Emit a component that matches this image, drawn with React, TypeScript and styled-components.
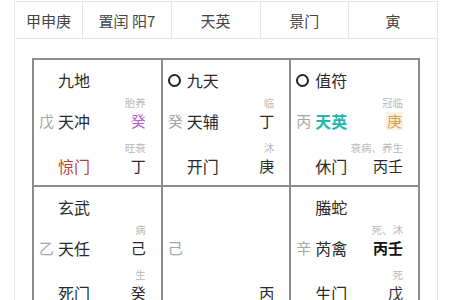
import React from 'react'
import styled, { createGlobalStyle, css } from 'styled-components'

const GlobalStyle = createGlobalStyle`
  html, body {
    margin: 0;
    padding: 0;
    background: #ffffff;
    font-family: "Noto Sans CJK SC", "Noto Sans", sans-serif;
    color: #333333;
  }
`

type Tone = 'plain' | 'purple' | 'orange' | 'strong'

type Palace = {
  god?: string
  marked?: boolean
  topLabel?: string
  stem?: string
  star?: string
  starTone?: 'plain' | 'teal'
  topRight?: string
  topRightTone?: Tone
  bottomLabel?: string
  door?: string
  doorTone?: 'plain' | 'red'
  bottomRight?: string
}

const summary = ['甲申庚', '置闰 阳7', '天英', '景门', '寅']

const palaces: Palace[] = [
  { god: '九地', topLabel: '胎养', stem: '戊', star: '天冲', topRight: '癸', topRightTone: 'purple', bottomLabel: '旺衰', door: '惊门', doorTone: 'red', bottomRight: '丁' },
  { god: '九天', marked: true, topLabel: '临', stem: '癸', star: '天辅', topRight: '丁', bottomLabel: '沐', door: '开门', bottomRight: '庚' },
  { god: '值符', marked: true, topLabel: '冠临', stem: '丙', star: '天英', starTone: 'teal', topRight: '庚', topRightTone: 'orange', bottomLabel: '衰病、养生', door: '休门', bottomRight: '丙壬' },
  { god: '玄武', topLabel: '病', stem: '乙', star: '天任', topRight: '己', bottomLabel: '生', door: '死门', bottomRight: '癸' },
  { stem: '己', bottomRight: '丙' },
  { god: '螣蛇', topLabel: '死、沐', stem: '辛', star: '芮禽', topRight: '丙壬', topRightTone: 'strong', bottomLabel: '死', door: '生门', bottomRight: '戊' },
]

const Frame = styled.div`
  width: 424px;
  margin: 1px 0 0 14px;
`

const Summary = styled.div`
  display: grid;
  grid-template-columns: 67px repeat(4, 1fr);
  height: 36px;
  border: 1px solid #e6e6e6;
`

const SummaryCell = styled.div`
  display: flex;
  align-items: center;
  justify-content: center;
  font-size: 15px;
  color: #444444;
  & + & {
    border-left: 1px solid #e6e6e6;
  }
`

const Panel = styled.div`
  border-left: 1px solid #e6e6e6;
  border-right: 1px solid #e6e6e6;
  padding: 19px 17px 0;
`

const Board = styled.div`
  display: grid;
  grid-template-columns: repeat(3, 1fr);
  grid-auto-rows: 125px;
  gap: 2px;
  background: #8c8c8c;
  border: 2px solid #8c8c8c;
`

const Cell = styled.div`
  background: #ffffff;
  padding: 9px 15px 0 5px;
  display: flex;
  flex-direction: column;
`

const Line = styled.div`
  display: grid;
  grid-template-columns: 19px 1fr auto;
  align-items: center;
  height: 22px;
  line-height: 22px;
`

const Block = styled.div`
  margin-top: 5px;
  & + & {
    margin-top: 9px;
  }
`

const Label = styled.div`
  height: 14px;
  line-height: 14px;
  font-size: 10.5px;
  color: #b8b8b8;
  text-align: right;
`

const Mark = styled.span`
  box-sizing: border-box;
  width: 13px;
  height: 13px;
  border: 2px solid #222222;
  border-radius: 50%;
`

const God = styled.span`
  grid-column: 2;
  font-size: 16px;
  color: #2a2a2a;
`

const Stem = styled.span`
  font-size: 15px;
  color: #a6a6a6;
`

const Star = styled.span<{ $tone?: 'plain' | 'teal' }>`
  grid-column: 2;
  font-size: 16px;
  color: #2a2a2a;
  ${p => p.$tone === 'teal' && css`
    color: #1fb9ad;
    font-weight: 700;
  `}
`

const Door = styled.span<{ $tone?: 'plain' | 'red' }>`
  grid-column: 2;
  font-size: 16px;
  color: ${p => (p.$tone === 'red' ? '#b8413d' : '#2a2a2a')};
`

const Right = styled.span<{ $tone?: Tone }>`
  grid-column: 3;
  font-size: 15px;
  color: #2a2a2a;
  ${p => p.$tone === 'purple' && css`color: #b35fd6;`}
  ${p => p.$tone === 'orange' && css`
    color: #d9a050;
    background: #fdf1e3;
    line-height: 18px;
    padding: 0 1px;
  `}
  ${p => p.$tone === 'strong' && css`
    color: #111111;
    font-weight: 700;
  `}
`

const PalaceCell = ({ palace }: { palace: Palace }) => (
  <Cell>
    <Line>
      {palace.marked ? <Mark /> : <span />}
      <God>{palace.god}</God>
    </Line>
    <Block>
      <Label>{palace.topLabel}</Label>
      <Line>
        <Stem>{palace.stem}</Stem>
        <Star $tone={palace.starTone}>{palace.star}</Star>
        <Right $tone={palace.topRightTone}>{palace.topRight}</Right>
      </Line>
    </Block>
    <Block>
      <Label>{palace.bottomLabel}</Label>
      <Line>
        <span />
        <Door $tone={palace.doorTone}>{palace.door}</Door>
        <Right>{palace.bottomRight}</Right>
      </Line>
    </Block>
  </Cell>
)

export default function App() {
  return (
    <>
      <GlobalStyle />
      <Frame>
        <Summary>
          {summary.map(text => (
            <SummaryCell key={text}>{text}</SummaryCell>
          ))}
        </Summary>
        <Panel>
          <Board>
            {palaces.map((palace, i) => (
              <PalaceCell key={i} palace={palace} />
            ))}
          </Board>
        </Panel>
      </Frame>
    </>
  )
}
